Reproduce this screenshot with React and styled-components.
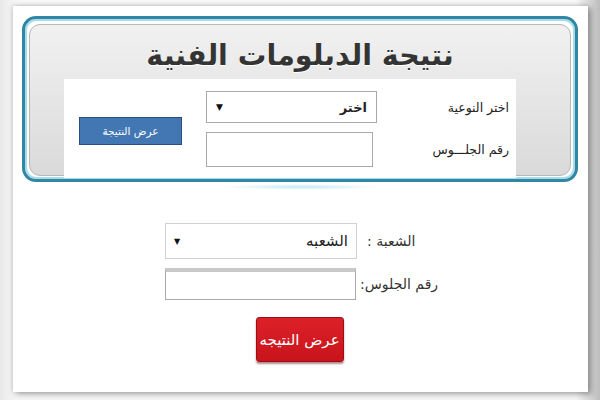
import React from 'react';
import styled, { createGlobalStyle } from 'styled-components';

const GlobalStyle = createGlobalStyle`
  html, body {
    margin: 0;
    padding: 0;
    background: linear-gradient(90deg, #e9e9e9 0%, #f7f7f7 3%, #f7f7f7 96%, #bdbdbd 100%);
  }
  body {
    width: 600px;
    height: 400px;
    overflow: hidden;
    font-family: 'DejaVu Sans', 'Noto Sans', sans-serif;
  }
`;

const Sheet = styled.div`
  margin: 6px 12px 0 13px;
  height: 386px;
  background: #ffffff;
  box-shadow: 3px 2px 6px rgba(0, 0, 0, 0.35), -1px -1px 4px rgba(0, 0, 0, 0.12);
  padding-top: 10px;
  box-sizing: border-box;
`;

const Panel = styled.div`
  margin: 0 10px 0 9px;
  border: 3px solid #2f87a4;
  border-radius: 14px;
  padding: 5px 4px 3px;
  background: #ffffff;
  box-shadow: inset 0 0 0 2px #a8dce9;
`;

const Inner = styled.div`
  border: 1px solid #b8b8b8;
  border-radius: 11px;
  background: linear-gradient(180deg, #f1f1f1 0%, #e3e3e3 60%, #dadada 100%);
  padding-top: 10px;
  display: flex;
  flex-direction: column;
`;

const Title = styled.h1`
  margin: 0;
  font-size: 28.5px;
  line-height: 42px;
  font-weight: 700;
  color: #343434;
  text-align: center;
  direction: rtl;
  text-shadow: 0 1px 0 #ffffff;
`;

const FormBox = styled.div`
  margin: 2px 54px -3px 34px;
  background: #ffffff;
  padding: 12px 7px 11px 17px;
  direction: rtl;
  display: grid;
  grid-template-columns: 132px 171px 24px 103px;
  grid-template-rows: 32px 35px;
  row-gap: 9px;
  align-items: center;
`;

const SmallLabel = styled.div`
  grid-column: 1;
  grid-row: ${p => p.row};
  font-size: 12.5px;
  color: #222;
`;

const SelectBox = styled.div`
  box-sizing: border-box;
  width: ${p => p.w}px;
  height: ${p => p.h}px;
  border: 1px solid ${p => p.border || '#a9a9a9'};
  background: #ffffff;
  display: flex;
  align-items: center;
  justify-content: space-between;
  padding: 0 ${p => p.pad || 10}px;
  direction: rtl;
  grid-column: 2;
  grid-row: 1;
`;

const SelectText = styled.span`
  font-size: ${p => p.size}px;
  font-weight: ${p => (p.bold ? 700 : 400)};
  color: #222;
`;

const Arrow = styled.span`
  font-size: ${p => p.size}px;
  color: #111;
`;

const TextBox = styled.div`
  box-sizing: border-box;
  width: ${p => p.w}px;
  height: ${p => p.h}px;
  border: 1px solid #a9a9a9;
  border-top: ${p => p.top || 1}px solid ${p => p.topColor || '#a9a9a9'};
  background: #ffffff;
  justify-self: end;
  grid-column: 2;
  grid-row: 2;
`;

const BlueButton = styled.button`
  grid-column: 4;
  grid-row: 1 / span 2;
  width: 103px;
  height: 28px;
  margin-top: 4px;
  background: #4277b3;
  border: 1px solid #2b4f7d;
  color: #ffffff;
  font-family: 'DejaVu Sans', sans-serif;
  font-size: 10.5px;
  direction: rtl;
  padding: 0;
`;

const Shine = styled.div`
  height: 6px;
  margin: 2px auto 0;
  width: 160px;
  background: radial-gradient(ellipse at center, rgba(150, 215, 235, 0.55) 0%, rgba(150, 215, 235, 0) 70%);
`;

const Lower = styled.div`
  margin-top: 33px;
  display: flex;
  flex-direction: column;
`;

const Row = styled.div`
  display: flex;
  align-items: center;
  gap: ${p => p.gap}px;
  padding-left: 152px;
  margin-bottom: ${p => p.mb || 0}px;
`;

const Label = styled.span`
  font-size: 14px;
  color: #333;
  direction: rtl;
`;

const RedButton = styled.button`
  align-self: center;
  margin-left: -2px;
  width: 88px;
  height: 45px;
  background: linear-gradient(180deg, #dd2028 0%, #c8141c 100%);
  border: 1px solid #9a0e14;
  border-radius: 3px;
  box-shadow: 0 2px 2px rgba(80, 0, 0, 0.45);
  color: #ffffff;
  font-family: 'DejaVu Sans', sans-serif;
  font-size: 15px;
  direction: rtl;
  padding: 0;
`;

export default function App() {
  return (
    <>
      <GlobalStyle />
      <Sheet>
        <Panel>
          <Inner>
            <Title>نتيجة الدبلومات الفنية</Title>
            <FormBox>
              <SmallLabel row={1}>اختر النوعية</SmallLabel>
              <SelectBox w={171} h={32} pad={9}>
                <SelectText size={13} bold>اختر</SelectText>
                <Arrow size={9}>▼</Arrow>
              </SelectBox>
              <BlueButton>عرض النتيجة</BlueButton>
              <SmallLabel row={2}>رقم الجلـــوس</SmallLabel>
              <TextBox w={167} h={35} />
            </FormBox>
          </Inner>
        </Panel>
        <Shine />
        <Lower>
          <Row gap={10} mb={9}>
            <SelectBox w={192} h={36} border="#d0d0d0" pad={8}>
              <SelectText size={15}>الشعبه</SelectText>
              <Arrow size={8}>▼</Arrow>
            </SelectBox>
            <Label>الشعبة :</Label>
          </Row>
          <Row gap={4} mb={17}>
            <TextBox w={191} h={32} top={4} topColor="#c9c9c9" />
            <Label>رقم الجلوس:</Label>
          </Row>
          <RedButton>عرض النتيجه</RedButton>
        </Lower>
      </Sheet>
    </>
  );
}
